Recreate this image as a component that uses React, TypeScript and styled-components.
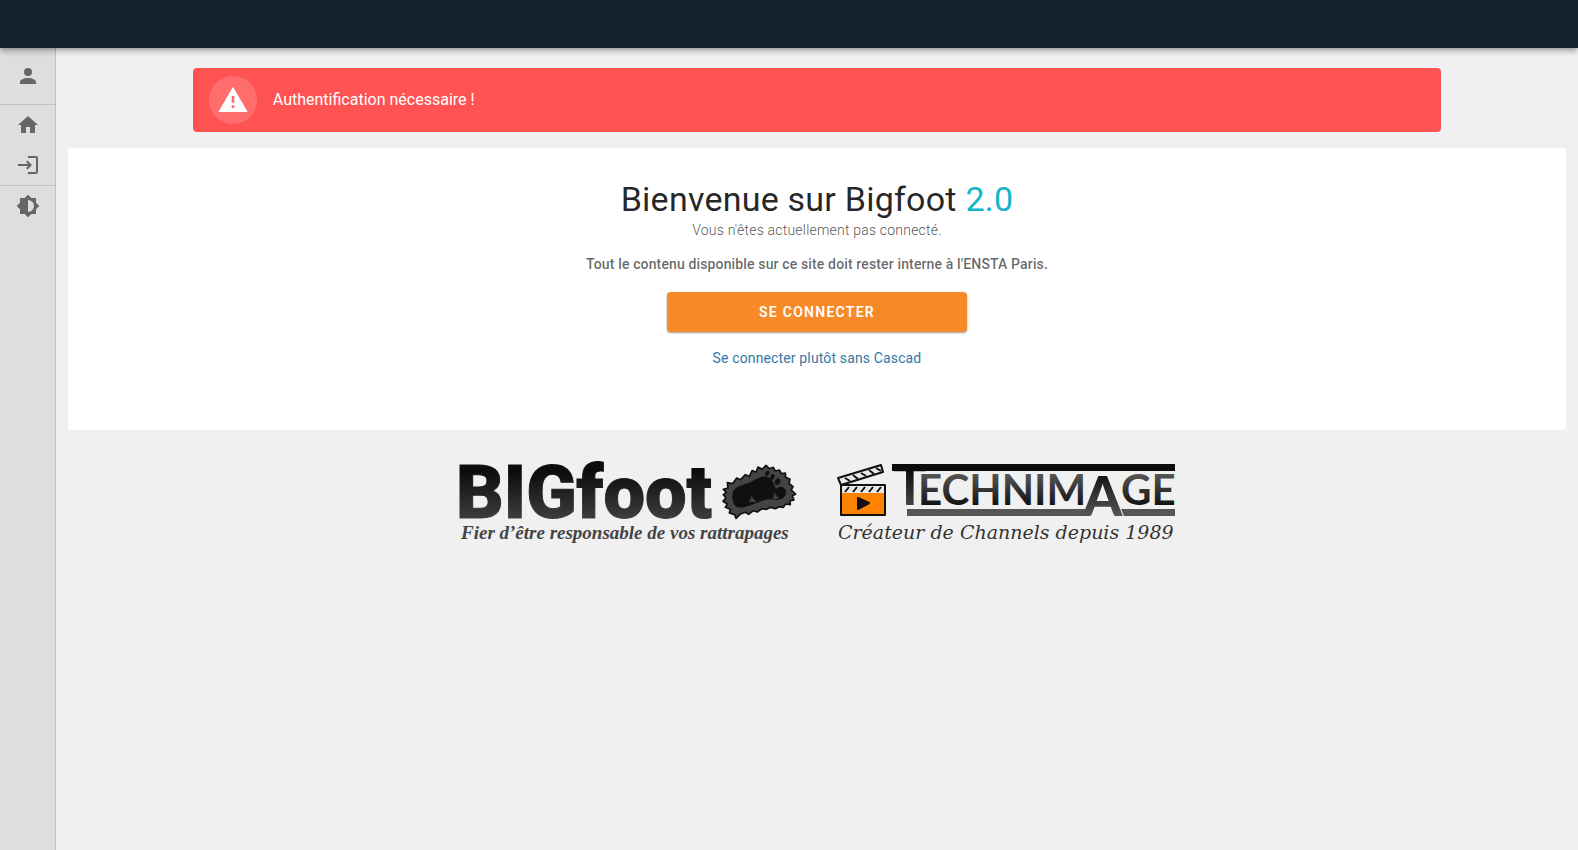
import React from "react";
import styled, { createGlobalStyle } from "styled-components";

const GlobalStyle = createGlobalStyle`
  *, *::before, *::after { box-sizing: border-box; }
  body {
    margin: 0;
    background: #f0f0f0;
    font-family: Roboto, sans-serif;
    font-size: 16px;
    line-height: 24px;
    color: rgba(0, 0, 0, 0.87);
  }
`;

const Page = styled.div`
  display: flex;
  flex-direction: column;
  min-height: 100vh;
`;

const AppBar = styled.header`
  position: relative;
  z-index: 2;
  flex: none;
  height: 48px;
  background: #15212a;
  box-shadow:
    0 2px 4px -1px rgba(0, 0, 0, 0.2),
    0 4px 5px 0 rgba(0, 0, 0, 0.14),
    0 1px 10px 0 rgba(0, 0, 0, 0.12);
`;

const Body = styled.div`
  display: flex;
  flex: 1;
`;

const Sidebar = styled.nav`
  flex: none;
  width: 56px;
  background: #dedede;
  border-right: 1px solid #c2c2c2;
`;

const NavGroup = styled.div<{ $padding?: string }>`
  display: flex;
  flex-direction: column;
  padding: ${(p) => p.$padding ?? "0"};
  & + & {
    border-top: 1px solid #c2c2c2;
  }
`;

const NavButton = styled.button`
  display: flex;
  align-items: center;
  justify-content: center;
  height: 40px;
  padding: 0;
  border: 0;
  background: none;
  color: #666;
  cursor: pointer;
`;

const Main = styled.main`
  display: flex;
  flex-direction: column;
  flex: 1;
  padding: 20px 12px;
`;

const Alert = styled.div`
  display: flex;
  align-items: center;
  gap: 16px;
  width: calc(100% * 10 / 12);
  margin: 0 auto 16px;
  padding: 8px 16px;
  border-radius: 4px;
  background: #ff5252;
  color: #fff;
`;

const AlertIcon = styled.span`
  display: flex;
  align-items: center;
  justify-content: center;
  width: 48px;
  height: 48px;
  border-radius: 50%;
  background: rgba(255, 255, 255, 0.16);
`;

const Card = styled.section`
  display: flex;
  flex-direction: column;
  align-items: center;
  padding: 31px 16px 61px;
  border-radius: 4px;
  background: #fff;
  text-align: center;
  font-size: 14px;
  line-height: 22px;
  letter-spacing: 0.01em;
  color: rgba(0, 0, 0, 0.6);
`;

const Title = styled.h1`
  margin: 0;
  font-size: 34px;
  font-weight: 400;
  line-height: 40px;
  letter-spacing: 0.007em;
  color: rgba(0, 0, 0, 0.87);
`;

const Version = styled.span`
  color: #12b5c9;
`;

const Status = styled.p`
  margin: 0 0 12px;
  font-weight: 300;
  letter-spacing: 0.015em;
  color: rgba(0, 0, 0, 0.7);
`;

const Notice = styled.p`
  margin: 0 0 17px;
  font-weight: 500;
`;

const LoginButton = styled.button`
  width: 300px;
  height: 40px;
  margin-bottom: 15px;
  border: 0;
  border-radius: 4px;
  background: #f68a28;
  box-shadow: 0 1px 2px rgba(0, 0, 0, 0.4);
  color: #fff;
  font: 600 14px/20px Roboto, sans-serif;
  letter-spacing: 0.09em;
  text-transform: uppercase;
  cursor: pointer;
`;

const AltLink = styled.a`
  color: #3577a6;
  text-decoration: none;
`;

const Logos = styled.footer`
  display: flex;
  flex-wrap: wrap;
  justify-content: center;
  gap: 36px;
  padding: 32px 0;
`;

const Logo = styled.svg`
  overflow: visible;
`;

const Icon = ({ path, size = 24 }: { path: string; size?: number }) => (
  <svg width={size} height={size} viewBox="0 0 24 24" fill="currentColor" aria-hidden="true">
    <path d={path} />
  </svg>
);

const icons = {
  account:
    "M12,4A4,4 0 0,1 16,8A4,4 0 0,1 12,12A4,4 0 0,1 8,8A4,4 0 0,1 12,4M12,14C16.42,14 20,15.79 20,18V20H4V18C4,15.79 7.58,14 12,14Z",
  home: "M10,20V14H14V20H19V12H22L12,3L2,12H5V20H10Z",
  login:
    "M12 3H20A2 2 0 0 1 22 5V19A2 2 0 0 1 20 21H14A2 2 0 0 1 12 21V19H20V5H12ZM11.5 7.5L16 12L11.5 16.5L10 15L12 13H2V11H12L10 9Z",
  brightness:
    "M12,18V6A6,6 0 0,1 18,12A6,6 0 0,1 12,18M20,15.31L23.31,12L20,8.69V4H15.31L12,0.69L8.69,4H4V8.69L0.69,12L4,15.31V20H8.69L12,23.31L15.31,20H20V15.31Z",
  alert: "M13,14H11V9H13M13,18H11V16H13M1,21H23L12,2L1,21Z",
};

const Footprint = () => (
  <g transform="translate(259 -4) scale(0.3333)" strokeLinejoin="round">
    <path
      d="M22 94L36 90L34 74L50 77L62 60L74 65L88 50L100 55L108 38L120 42L126 27L138 34L150 22L160 32L172 28L178 39L190 36L196 47L208 45L209 58L222 64L219 76L231 86L226 96L239 108L229 114L234 126L222 129L223 140L209 138L202 148L190 146L178 152L164 148L152 154L138 152L124 162L112 158L98 169L88 163L74 168L60 181L56 170L40 165L43 154L28 148L34 138L21 130L30 120L22 110L31 103Z"
      fill="#444" stroke="#111" strokeWidth="5"
    />
    <path
      d="M54 96C66 80 92 80 112 68C128 58 146 50 160 60C174 70 176 84 180 94C188 82 208 84 210 102C210 122 188 130 168 124C146 122 130 134 108 140C90 146 70 154 58 144C46 130 46 108 54 96Z"
      fill="#101010"
    />
    <ellipse cx="154" cy="46" rx="6" ry="8" fill="#101010" transform="rotate(30 154 46)" />
    <ellipse cx="169" cy="57" rx="6" ry="9" fill="#101010" transform="rotate(25 169 57)" />
    <ellipse cx="185" cy="71" rx="8" ry="10" fill="#101010" transform="rotate(20 185 71)" />
    <path d="M104 112Q108 124 96 134Q112 128 124 134Q112 124 104 112ZM174 98Q176 112 170 122Q182 124 190 120Q178 114 174 98Z" fill="#444" />
  </g>
);

const BigfootLogo = () => (
  <Logo width="342" height="84" viewBox="0 0 342 84" role="img" aria-label="Bigfoot">
    <defs>
      <linearGradient id="ink" x1="0" y1="4" x2="0" y2="56" gradientUnits="userSpaceOnUse">
        <stop offset="0.1" stopColor="#0c0c0c" />
        <stop offset="1" stopColor="#3c3c3c" />
      </linearGradient>
    </defs>
    <text x="-1" y="56" fontFamily="Roboto" fontWeight="900" fontSize="74" fill="url(#ink)" stroke="url(#ink)" strokeWidth="1">
      BIGfoot
    </text>
    <Footprint />
    <text x="4" y="77" fontFamily="Liberation Serif" fontWeight="700" fontStyle="italic" fontSize="19" fill="#444">
      Fier d’être responsable de vos rattrapages
    </text>
  </Logo>
);

const Clapper = () => (
  <g stroke="#111" strokeLinejoin="round">
    <path d="M6 23H50V53H6Z" fill="#ff8200" strokeWidth="2" />
    <path d="M7 24H49V31H7Z" fill="#e8e8e8" stroke="none" />
    <path d="M10 30L14 25M18 30L22 25M26 30L30 25M34 30L38 25M42 30L46 25" strokeWidth="2" />
    <path d="M3 16L46 3L48 10L6 23Z" fill="#e8e8e8" strokeWidth="2" />
    <path d="M10 16L15 19M18 13L23 17M26 11L31 14M34 8L39 12M41 6L46 9" strokeWidth="2" />
    <path d="M23 36V47L34 41Z" fill="#111" strokeWidth="2" />
  </g>
);

const TechnimageLogo = () => (
  <Logo width="342" height="84" viewBox="0 0 342 84" role="img" aria-label="Technimage">
    <defs>
      <linearGradient id="steel" x1="0" y1="12" x2="0" y2="44" gradientUnits="userSpaceOnUse">
        <stop offset="0" stopColor="#555" />
        <stop offset="1" stopColor="#111" />
      </linearGradient>
      <linearGradient id="fade" x1="0" y1="8" x2="0" y2="54" gradientUnits="userSpaceOnUse">
        <stop offset="0" stopColor="#0c0c0c" />
        <stop offset="1" stopColor="#555" />
      </linearGradient>
    </defs>
    <Clapper />
    <rect x="57" y="2" width="283" height="7" fill="#0c0c0c" />
    <path d="M72 47H252L249 54H72ZM286 47H340V54H289Z" fill="#555" />
    <g fontFamily="Lato" fontWeight="700" fontSize="42">
      <text x="58" y="43" fontSize="56" fill="url(#fade)">T</text>
      <text x="83" y="43" fill="url(#steel)">ECHNIM</text>
      <text x="248" y="54" fontSize="56" fontWeight="900" fill="url(#fade)">A</text>
      <text x="286" y="43" fill="url(#steel)">GE</text>
    </g>
    <text x="3" y="77" fontFamily="DejaVu Serif" fontStyle="italic" fontSize="19" fill="#333">
      Créateur de Channels depuis 1989
    </text>
  </Logo>
);

export default function App() {
  return (
    <>
      <GlobalStyle />
      <Page>
        <AppBar />
        <Body>
          <Sidebar aria-label="Navigation">
            <NavGroup $padding="8px 0">
              <NavButton aria-label="Compte"><Icon path={icons.account} /></NavButton>
            </NavGroup>
            <NavGroup>
              <NavButton aria-label="Accueil"><Icon path={icons.home} /></NavButton>
              <NavButton aria-label="Connexion"><Icon path={icons.login} /></NavButton>
            </NavGroup>
            <NavGroup>
              <NavButton aria-label="Thème"><Icon path={icons.brightness} /></NavButton>
            </NavGroup>
          </Sidebar>
          <Main>
            <Alert role="alert">
              <AlertIcon><Icon path={icons.alert} size={32} /></AlertIcon>
              Authentification nécessaire !
            </Alert>
            <Card>
              <Title>Bienvenue sur Bigfoot <Version>2.0</Version></Title>
              <Status>Vous n'êtes actuellement pas connecté.</Status>
              <Notice>Tout le contenu disponible sur ce site doit rester interne à l'ENSTA Paris.</Notice>
              <LoginButton type="button">Se connecter</LoginButton>
              <AltLink href="#login">Se connecter plutôt sans Cascad</AltLink>
            </Card>
            <Logos>
              <BigfootLogo />
              <TechnimageLogo />
            </Logos>
          </Main>
        </Body>
      </Page>
    </>
  );
}
